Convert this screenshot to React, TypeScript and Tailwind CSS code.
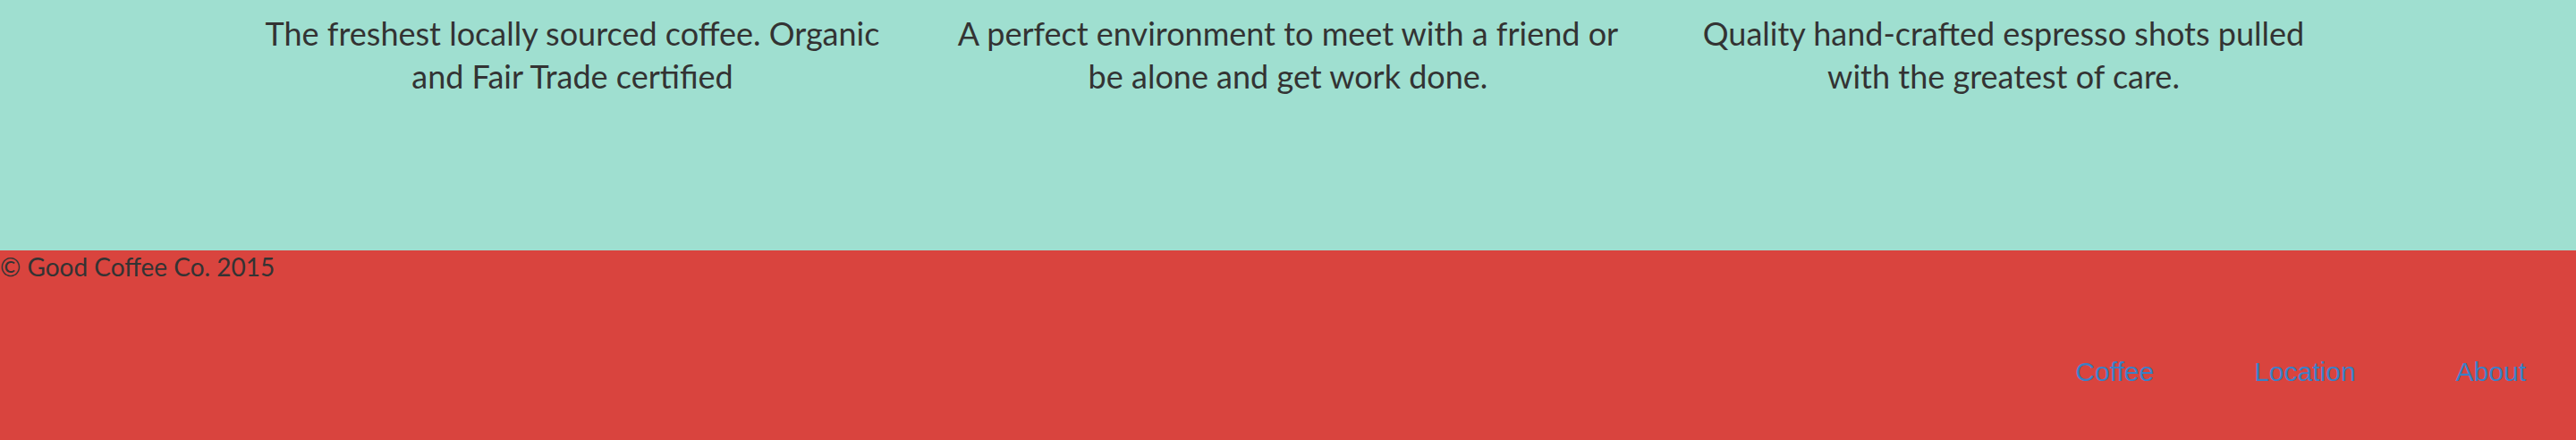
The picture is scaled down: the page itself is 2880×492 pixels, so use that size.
const features = [
  "The freshest locally sourced coffee. Organic and Fair Trade certified",
  "A perfect environment to meet with a friend or be alone and get work done.",
  "Quality hand-crafted espresso shots pulled with the greatest of care.",
];

const links = ["Coffee", "Location", "About"];

const App = () => {
  return (
    <div className="w-full">
      <section className="bg-[#9fdfd0] h-[280px]">
        <div className="w-[2400px] mx-auto grid grid-cols-3 pt-[13px]">
          {features.map((text, i) => (
            <div key={i} className="flex justify-center">
              <p className="w-[744px] text-center text-[36px] leading-[48px] text-[#333333] font-['Lato',sans-serif]">
                {text}
              </p>
            </div>
          ))}
        </div>
      </section>

      <footer className="bg-[#d9443e] h-[212px] flex flex-col">
        <p className="text-[28px] leading-[36px] text-[#333333] font-['Lato',sans-serif]">
          © Good Coffee Co. 2015
        </p>
        <ul className="flex justify-end mt-[82px]">
          {links.map((link) => (
            <li key={link} className="px-[56px]">
              <a
                href="#"
                className="text-[30px] leading-[36px] text-[#3a80c6] font-['Liberation_Sans',Arial,sans-serif]"
              >
                {link}
              </a>
            </li>
          ))}
        </ul>
      </footer>
    </div>
  );
};

export default App;
